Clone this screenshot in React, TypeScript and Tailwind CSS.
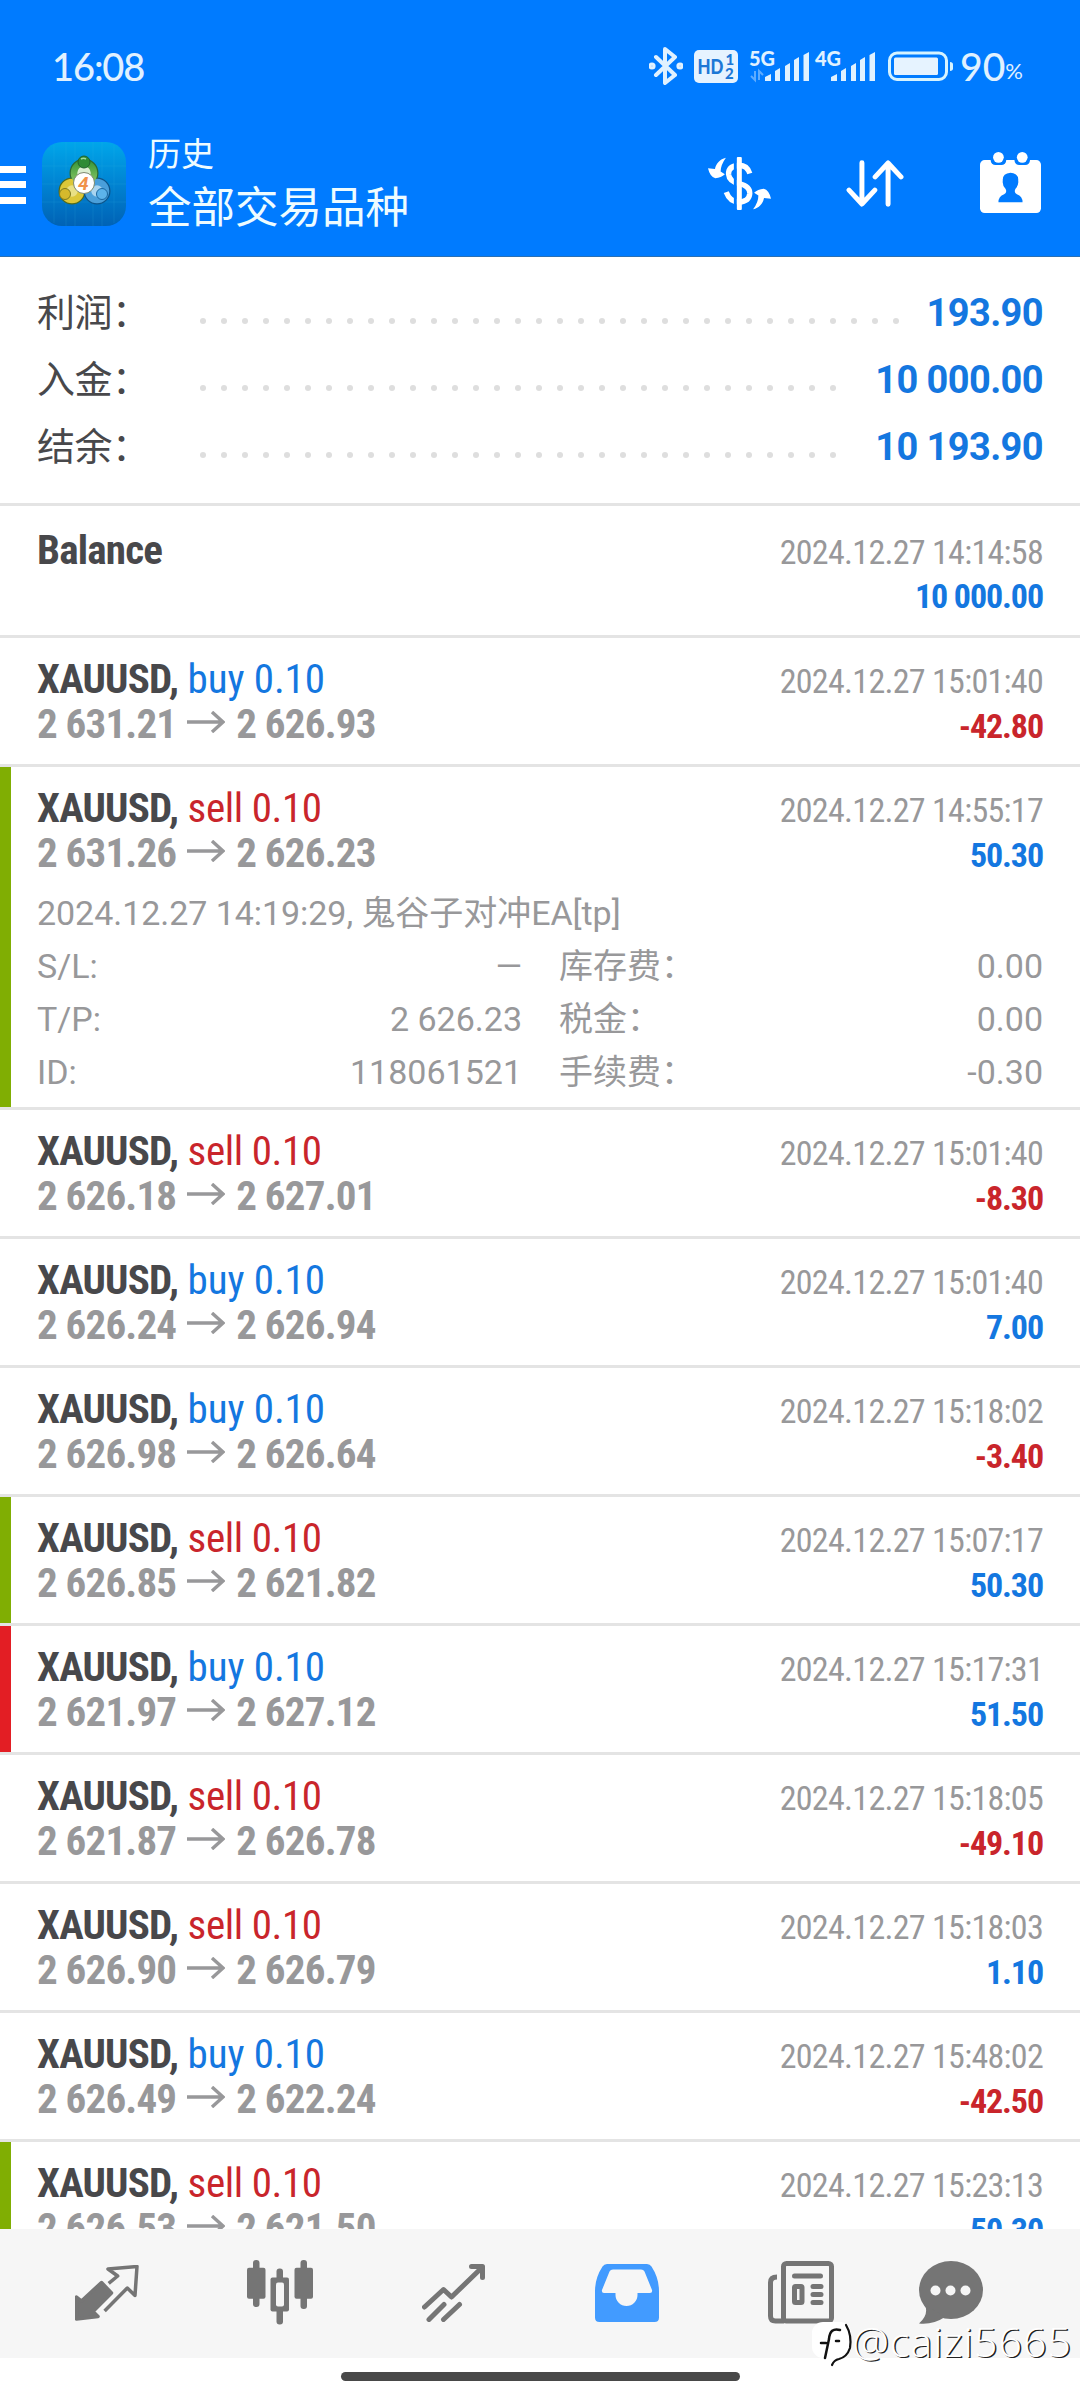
type Deal = {
  side: "buy" | "sell";
  from: string;
  to: string;
  time: string;
  profit: string;
  marker?: "tp" | "sl";
  expanded?: boolean;
};

const summary = [
  { label: "利润：", value: "193.90", dots: 34 },
  { label: "入金：", value: "10 000.00", dots: 31 },
  { label: "结余：", value: "10 193.90", dots: 31 },
];

const deals: Deal[] = [
  { side: "buy", from: "2 631.21", to: "2 626.93", time: "15:01:40", profit: "-42.80" },
  { side: "sell", from: "2 631.26", to: "2 626.23", time: "14:55:17", profit: "50.30", marker: "tp", expanded: true },
  { side: "sell", from: "2 626.18", to: "2 627.01", time: "15:01:40", profit: "-8.30" },
  { side: "buy", from: "2 626.24", to: "2 626.94", time: "15:01:40", profit: "7.00" },
  { side: "buy", from: "2 626.98", to: "2 626.64", time: "15:18:02", profit: "-3.40" },
  { side: "sell", from: "2 626.85", to: "2 621.82", time: "15:07:17", profit: "50.30", marker: "tp" },
  { side: "buy", from: "2 621.97", to: "2 627.12", time: "15:17:31", profit: "51.50", marker: "sl" },
  { side: "sell", from: "2 621.87", to: "2 626.78", time: "15:18:05", profit: "-49.10" },
  { side: "sell", from: "2 626.90", to: "2 626.79", time: "15:18:03", profit: "1.10" },
  { side: "buy", from: "2 626.49", to: "2 622.24", time: "15:48:02", profit: "-42.50" },
  { side: "sell", from: "2 626.53", to: "2 621.50", time: "15:23:13", profit: "50.30", marker: "tp" },
];

const details = [
  ["S/L:", "—", "库存费：", "0.00"],
  ["T/P:", "2 626.23", "税金：", "0.00"],
  ["ID:", "118061521", "手续费：", "-0.30"],
];

function Signal({ label, data }: { label: string; data?: boolean }) {
  return (
    <svg viewBox="0 -8 60 48" className="h-12 w-[60px] overflow-visible" fill="#e0f1ff">
      <text x="-1" y="16" fontSize="21.500" fontWeight="900" textLength="26" lengthAdjust="spacingAndGlyphs" className="font-['Lato',sans-serif]">
        {label}
      </text>
      {data && (
        <g fill="none" stroke="#5eacff" strokeWidth="2">
          <path d="M5 21v9l-4-4" />
          <path d="M9 30v-9l4 4" />
        </g>
      )}
      <path d="M15 31v-4l6-3v7Z" />
      <path d="M25 31V21l5-3v13Z" />
      <path d="M35 31V16l5-3v18Z" />
      <path d="M44 31V10l5-3v24Z" />
      <path d="M53.500 31V5l5.500-3v29Z" />
    </svg>
  );
}

function StatusBar() {
  return (
    <div className="flex h-[134px] items-center pb-[2px] pl-[52px] pr-[57px] font-['Lato',sans-serif] text-[#e0f1ff]">
      <span className="text-[38px] font-medium leading-none tracking-[-1.100px]">16:08</span>
      <div className="ml-auto flex items-center">
        <svg viewBox="0 0 34 38" className="mr-[11px] h-[38px] w-[34px]" fill="none" stroke="#e0f1ff" strokeWidth="4" strokeLinejoin="round" strokeLinecap="round">
          <path d="m7 10 19 18-10 8V2l10 8L7 28" />
          <circle cx="3" cy="19" r="1.600" />
          <circle cx="31" cy="19" r="1.600" />
        </svg>
        <svg viewBox="0 0 44 33" className="mr-[12px] h-[33px] w-[44px]">
          <rect width="44" height="33" rx="5" fill="#e6f3ff" />
          <g fill="#1d78d6" className="font-['Lato',sans-serif]" fontWeight="900">
            <text x="3.500" y="23.500" fontSize="20" textLength="26" lengthAdjust="spacingAndGlyphs">HD</text>
            <text x="31.500" y="15" fontSize="15">1</text>
            <text x="31" y="29" fontSize="15">2</text>
          </g>
        </svg>
        <Signal label="5G" data />
        <span className="w-[6px]" />
        <Signal label="4G" />
        <svg viewBox="0 0 66 30" className="ml-[12px] mr-[6px] h-[30px] w-[66px]">
          <rect x="1.500" y="2" width="57" height="26.500" rx="7.500" fill="none" stroke="#d6f3ff" strokeWidth="3" />
          <rect x="6" y="6.500" width="44" height="17.500" rx="1.500" fill="#e6f3ff" />
          <path d="M62 11c2 0 3 1 3 2.500v4c0 1.500-1 2.500-3 2.500Z" fill="#d6f3ff" />
        </svg>
        <span className="text-[39px] font-medium leading-none">90</span>
        <span className="mt-[9px] text-[22px] leading-none">%</span>
      </div>
    </div>
  );
}

function AppLogo() {
  return (
    <svg viewBox="0 0 84 84" className="h-[84px] w-[84px]">
      <defs>
        <linearGradient id="tile" x1="0" y1="0" x2="0" y2="1">
          <stop offset="0" stopColor="#00a6ea" />
          <stop offset="0.500" stopColor="#0083d2" />
          <stop offset="1" stopColor="#0062b5" />
        </linearGradient>
        <linearGradient id="green" x1="0" y1="0" x2="0" y2="1">
          <stop offset="0" stopColor="#3f9a3e" />
          <stop offset="1" stopColor="#8ac763" />
        </linearGradient>
      </defs>
      <rect width="84" height="84" rx="20" fill="url(#tile)" />
      <path d="M12 3v78M24 0v84M33 0v84M51 0v84M60 0v84M72 3v78M0 24h84M0 42h84M0 60h84" stroke="#3fc0ee" strokeOpacity="0.15" />
      <circle cx="30" cy="49" r="9" fill="none" stroke="#4f6a1c" strokeWidth="9" />
      <circle cx="55" cy="49" r="9" fill="none" stroke="#0d5489" strokeWidth="9" />
      <circle cx="42" cy="31" r="10" fill="none" stroke="#2c6a32" strokeWidth="9" />
      <circle cx="30" cy="49" r="9" fill="#e9e084" stroke="#dcc738" strokeWidth="6.500" />
      <circle cx="55" cy="49" r="9" fill="#a9d4ef" stroke="#4a9fda" strokeWidth="6.500" />
      <circle cx="42" cy="31" r="10" fill="#dcefd2" stroke="url(#green)" strokeWidth="6.500" />
      <circle cx="42" cy="20" r="6" fill="#2e8b35" stroke="#1f6230" />
      <circle cx="23" cy="52" r="5.500" fill="#d5b92c" stroke="#7d7a20" />
      <circle cx="60" cy="52" r="5.500" fill="#5cb3ea" stroke="#1b67a0" />
      <path d="M39 17a4 3 0 0 1 5 0" fill="none" stroke="#9fd89b" strokeWidth="1.500" />
      <circle cx="42" cy="41" r="10.500" fill="#fff" stroke="#7e8a70" />
      <text x="36" y="48" fontSize="19" fontWeight="700" fontStyle="italic" fill="#f0924a" className="font-['Roboto',sans-serif]">
        4
      </text>
    </svg>
  );
}

function AppBar() {
  return (
    <div className="flex h-[123px] items-center border-b border-[#2a70b4] pb-[23px] pr-[39px] text-[#eefcff]">
      <div className="mr-[16px] mt-[2px] flex flex-col gap-[8.500px]">
        <span className="h-[7px] w-[26px] bg-white" />
        <span className="h-[7px] w-[26px] bg-white" />
        <span className="h-[7px] w-[26px] bg-white" />
      </div>
      <AppLogo />
      <div className="ml-[22px] font-['Roboto','Noto_Sans_CJK_SC',sans-serif]">
        <div className="text-[33px] leading-[50px]">历史</div>
        <div className="text-[43.500px] leading-[58px]">全部交易品种</div>
      </div>
      <svg viewBox="0 0 190 164" className="ml-auto h-[55px] w-[63px]" fill="#fff">
        <path d="M126 52Q118 26 92 27Q61 30 62 54Q64 76 94 82Q127 90 126 112Q124 136 94 138Q66 138 55 108" fill="none" stroke="#fff" strokeWidth="16" />
        <path d="M78 0h9v164h-9Z" fill="#007bff" />
        <rect x="87" y="2" width="15" height="160" rx="3" />
        <path d="M54 4C36 8 24 22 21 38L0 36Q6 62 22 66Q40 64 51 54L38 46Q38 26 54 4Z" />
        <path d="M54 4C36 8 24 22 21 38L0 36Q6 62 22 66Q40 64 51 54L38 46Q38 26 54 4Z" transform="rotate(180 95 82)" />
      </svg>
      <svg viewBox="0 0 173 142" className="ml-[75px] h-[47px] w-[58px]" fill="none" stroke="#fff" strokeWidth="15" strokeLinecap="round" strokeLinejoin="round">
        <path d="M47 8v124M8 91l39 42 39-42" />
        <path d="M126 134V10M87 51l39-42 39 42" />
      </svg>
      <svg viewBox="0 0 182 182" className="-mt-[2px] ml-[76px] h-[61px] w-[61px]">
        <rect y="24" width="182" height="158" rx="14" fill="#fff" />
        <g fill="#007bff">
          <rect x="32" y="0" width="46" height="39" rx="14" />
          <rect x="103" y="0" width="46" height="39" rx="14" />
          <path d="M55 150Q55 132 72 126Q82 121 76 110Q66 98 68 86Q66 64 91 62Q116 64 114 86Q116 98 106 110Q100 121 110 126Q127 132 127 150Z" />
        </g>
        <circle cx="55" cy="16" r="16" fill="#fff" />
        <circle cx="126" cy="16" r="16" fill="#fff" />
      </svg>
    </div>
  );
}

function Summary() {
  return (
    <div className="h-[246px] px-[37px] pt-[23px] text-[38px] leading-[67px]">
      {summary.map((row) => (
        <div key={row.label} className="flex h-[67px] items-center">
          <span className="w-[163px] tracking-[-0.5px] text-[#48484b]">{row.label}</span>
          <span className="mt-[14px] flex gap-[15px]">
            {Array.from({ length: row.dots }, (_, i) => (
              <span key={i} className="h-[6px] w-[6px] rounded-full bg-[#dedede]" />
            ))}
          </span>
          <span className="ml-auto font-bold tracking-[-0.6px] text-[#1477e0]">{row.value}</span>
        </div>
      ))}
    </div>
  );
}

function Arrow() {
  return (
    <svg viewBox="0 0 38 22" className="mx-[11px] inline-block h-[22px] w-[38px] align-[5px]" fill="none" stroke="#98989a" strokeWidth="3.4">
      <path d="M0 11h36M25 1l11 10-11 10" />
    </svg>
  );
}

function Profit({ value }: { value: string }) {
  return (
    <span className={`text-[34px] font-bold tracking-[-1.100px] ${value.startsWith("-") ? "text-[#c9252b]" : "text-[#1477e0]"}`}>
      {value}
    </span>
  );
}

function DealDetails() {
  return (
    <div className="mt-[11px] font-['Roboto','Noto_Sans_CJK_SC',sans-serif] text-[34px] leading-[53px] text-[#98989a]">
      <div className="tracking-[-0.050px]">2024.12.27 14:19:29, 鬼谷子对冲EA[tp]</div>
      {details.map(([label, value, feeLabel, fee]) => (
        <div key={label} className="flex">
          <span>{label}</span>
          <span className="ml-auto">{value}</span>
          <span className="ml-[37px] flex w-[484px] justify-between">
            <span>{feeLabel}</span>
            <span>{fee}</span>
          </span>
        </div>
      ))}
    </div>
  );
}

function DealRow({ deal }: { deal: Deal }) {
  const marker = deal.marker === "tp" ? "bg-[#80ae03]" : deal.marker === "sl" ? "bg-[#e31e24]" : "";

  return (
    <li className={`flex shrink-0 border-t-[3px] border-[#e4e4e4] ${deal.expanded ? "h-[343px]" : "h-[129px]"}`}>
      <span className={`w-[11px] shrink-0 ${marker}`} />
      <div className="flex-1 pl-[26px] pr-[37px] pt-[19px] leading-[45px]">
        <div className="flex h-[45px] items-baseline justify-between">
          <span className="text-[41px]">
            <b className="tracking-[-0.8px] text-[#48484b]">XAUUSD,</b>{" "}
            <span className={deal.side === "buy" ? "tracking-[-0.1px] text-[#1477e0]" : "tracking-[-0.4px] text-[#c9252b]"}>
              {deal.side} 0.10
            </span>
          </span>
          <span className="text-[34px] tracking-[-0.7px] text-[#98989a]">2024.12.27 {deal.time}</span>
        </div>
        <div className="flex h-[45px] items-baseline justify-between">
          <span className="text-[41px] font-bold tracking-[-0.8px] text-[#98989a]">
            {deal.from}
            <Arrow />
            {deal.to}
          </span>
          <Profit value={deal.profit} />
        </div>
        {deal.expanded && <DealDetails />}
      </div>
    </li>
  );
}

function NavBar() {
  return (
    <nav className="flex h-[129px] shrink-0 items-center bg-[#f6f6f6] pb-[2px] pl-[20px]">
      <span className="flex w-[173px] justify-center">
        <svg viewBox="0 0 64 56" className="h-[56px] w-[64px]" fill="none" stroke="#757575" strokeWidth="3.500" strokeLinejoin="round">
          <path d="M26.500 17.500 36.500 28 18 46.500l5 5L1.500 54V32l5 4Z" fill="#757575" />
          <path d="m33.700 18.300 9-7.300-9.700-7L62 1.500l-2 29-7.700-7.500-22.700 23" />
        </svg>
      </span>
      <span className="flex w-[173px] justify-center">
        <svg viewBox="0 0 66 65" className="h-[65px] w-[66px]" fill="#757575">
          <rect x="6" width="6.500" height="47" rx="3" />
          <rect y="7.700" width="18.500" height="31" rx="2" />
          <rect x="53.500" width="6.500" height="49" rx="3" />
          <rect x="47.500" y="7.700" width="18.500" height="31" rx="2" />
          <rect x="29.500" y="8.500" width="6.500" height="56" rx="3" />
          <rect x="23.500" y="17.500" width="18.500" height="34" rx="2" />
          <rect x="29" y="22.500" width="8" height="24" rx="2" fill="#f6f6f6" />
        </svg>
      </span>
      <span className="flex w-[174px] justify-center">
        <svg viewBox="0 0 63 58" className="h-[58px] w-[63px]" fill="none" stroke="#757575" strokeWidth="5" strokeLinecap="round" strokeLinejoin="round">
          <path d="m2.500 43 19-17.500 8 7.500L60 3.500" />
          <path d="M49.500 2.500H60.500V13.500" />
          <path d="m7 55.500 15-15M21.500 55.500l16-15" />
        </svg>
      </span>
      <span className="flex w-[174px] justify-center">
        <svg viewBox="0 0 64 58" className="h-[58px] w-[64px]" fill="#429bff">
          <path
            fillRule="evenodd"
            d="M12 0h40q3 0 4.500 2.500Q64 14 64 27v26.500q0 4.500-4.500 4.500h-55Q0 58 0 53.500V27Q0 14 7.500 2.500 9 0 12 0ZM18 5.500q-2.500 0-3.500 2L7 26q-.7 3 2 3h11.500v2a11 11 0 0 0 22 0v-2H55q2.700 0 2-3L49.500 7.500q-1-2-3.500-2Z"
          />
        </svg>
      </span>
      <span className="flex w-[174px] justify-center">
        <svg viewBox="0 0 66 63" className="h-[63px] w-[66px]" fill="none" stroke="#757575" strokeWidth="5" strokeLinecap="round">
          <rect x="15.500" y="2.500" width="48" height="57.500" rx="3" />
          <path d="M9 16Q2.500 16 2.500 21.500V55q0 5 5 5H16" strokeLinecap="butt" />
          <path d="M26.500 15h26M45 25.500h8M45 33.500h8M45 41.500h8" />
          <rect x="26.500" y="25.500" width="7.500" height="16" rx="1" />
        </svg>
      </span>
      <span className="flex w-[125px] justify-center">
        <svg viewBox="0 0 64 63" className="h-[63px] w-[64px]" fill="#757575">
          <ellipse cx="32" cy="29" rx="32" ry="29" />
          <path d="M6 44q4 10-6 18.500Q14 64 26 56Z" />
          <g fill="#f6f6f6">
            <circle cx="16.500" cy="29.500" r="5" />
            <circle cx="31.500" cy="29.500" r="5" />
            <circle cx="46.500" cy="29.500" r="5" />
          </g>
        </svg>
      </span>
    </nav>
  );
}

function Watermark() {
  return (
    <div className="absolute bottom-[33px] right-[8px] flex items-center text-white">
      <svg viewBox="0 0 44 46" className="-mr-[4px] mt-[6px] h-[46px] w-[44px] shrink-0" fill="none" strokeLinecap="round">
        <rect x="0" y="1" width="39" height="36" rx="11" fill="#fff" />
        <path d="M34 4q6 10 4 23-3 9-11 11-5 1-7 6" stroke="#111" strokeWidth="2.200" />
        <path d="M28 9q-10-3-11 9l-4 19M9 22h5M24 20h3" stroke="#111" strokeWidth="2.500" />
      </svg>
      <span className="font-['Open_Sans',sans-serif] text-[41px] font-light leading-[50px] tracking-[1.100px] [text-shadow:1.5px_1px_0_#222]">
        @caizi5665
      </span>
    </div>
  );
}

export default function App() {
  return (
    <div className="relative flex h-[2400px] w-[1080px] flex-col overflow-hidden bg-white font-['Roboto','Noto_Sans_CJK_SC',sans-serif]">
      <header className="shrink-0 bg-[#007bff]">
        <StatusBar />
        <AppBar />
      </header>

      <main className="min-h-0 flex-1 overflow-hidden">
        <Summary />
        <ul className="flex flex-col font-['Roboto_Condensed','Roboto',sans-serif]">
          <li className="h-[132px] shrink-0 border-t-[3px] border-[#e4e4e4] px-[37px] pt-[22px] leading-[45px]">
            <div className="flex h-[45px] items-baseline justify-between">
              <b className="text-[41px] tracking-[-0.8px] text-[#48484b]">Balance</b>
              <span className="text-[34px] tracking-[-0.7px] text-[#98989a]">2024.12.27 14:14:58</span>
            </div>
            <div className="flex h-[45px] items-baseline justify-end pt-px">
              <Profit value="10 000.00" />
            </div>
          </li>
          {deals.map((deal, index) => (
            <DealRow key={index} deal={deal} />
          ))}
        </ul>
      </main>

      <NavBar />
      <div className="flex h-[42px] shrink-0 justify-center pt-[14px]">
        <span className="h-[9px] w-[399px] rounded-full bg-[#484848]" />
      </div>
      <Watermark />
    </div>
  );
}
